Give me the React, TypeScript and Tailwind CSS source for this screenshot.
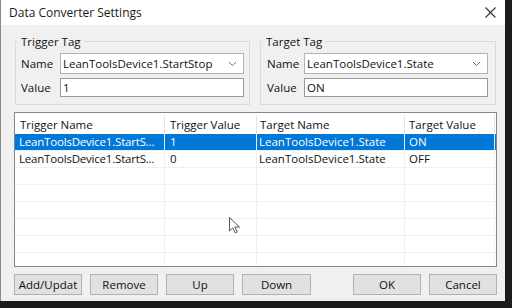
import React from 'react';

type Row = { trigger: string; tval: string; target: string; val: string };

const ROWS: Row[] = [
  { trigger: 'LeanToolsDevice1.StartS...', tval: '1', target: 'LeanToolsDevice1.State', val: 'ON' },
  { trigger: 'LeanToolsDevice1.StartS...', tval: '0', target: 'LeanToolsDevice1.State', val: 'OFF' },
  { trigger: '', tval: '', target: '', val: '' },
  { trigger: '', tval: '', target: '', val: '' },
  { trigger: '', tval: '', target: '', val: '' },
  { trigger: '', tval: '', target: '', val: '' },
  { trigger: '', tval: '', target: '', val: '' },
  { trigger: '', tval: '', target: '', val: '' },
];

const Chevron = () => (
  <svg width="9" height="6" viewBox="0 0 9 6" className="shrink-0">
    <path d="M1 1 L4.5 4.5 L8 1" fill="none" stroke="#6d6d6d" strokeWidth="1" />
  </svg>
);

const TagGroup: React.FC<{ title: string; name: string; value: string; wide?: boolean }> = ({ title, name, value, wide }) => (
  <fieldset className={`border border-[#d9d9d9] ${wide ? 'w-[236px]' : 'w-[235px]'}`}>
    <legend className="ml-[2px] px-[3px] leading-[15px]">{title}</legend>
    <div className={`flex flex-col gap-[4px] pt-[4px] pb-[7px] ${wide ? 'pl-[6px]' : 'pl-[5px]'}`}>
      <div className="flex items-center">
        <span className={wide ? 'w-[37px]' : 'w-[39px]'}>Name</span>
        <div className="flex items-center justify-between h-[21px] w-[184px] bg-white border border-[#b4b4b4] pl-[2px] pr-[6px]">
          <span className="whitespace-nowrap">{name}</span>
          <Chevron />
        </div>
      </div>
      <div className="flex items-center">
        <span className={wide ? 'w-[37px]' : 'w-[39px]'}>Value</span>
        <div className="flex items-center h-[19px] w-[184px] bg-white border border-[#9a9a9a] pl-[2px]">
          <span>{value}</span>
        </div>
      </div>
    </div>
  </fieldset>
);

const Button: React.FC<{ label: string; w?: string }> = ({ label, w }) => (
  <button className={`h-[21px] ${w ?? 'w-[68px]'} bg-[#e1e1e1] border border-[#b2b2b2] text-[#111] flex items-center justify-center`}>
    {label}
  </button>
);

export default function App() {
  return (
    <div className="w-[512px] h-[308px] bg-[#1c1c1c] font-['Open_Sans','Liberation_Sans',sans-serif] text-[11.5px] text-[#111]">
      <div className="w-[505px] h-[301px] border-l border-[#8a8a8a] flex flex-col bg-[#f0f0f0]">
        {/* title bar */}
        <div className="h-[25px] bg-white flex items-center justify-between pl-[8px] pr-[9px] shrink-0">
          <span className="text-[12px] text-[#1a1a1a]">Data Converter Settings</span>
          <svg width="11" height="11" viewBox="0 0 11 11">
            <path d="M0.5 0.5 L10.5 10.5 M10.5 0.5 L0.5 10.5" stroke="#333" strokeWidth="1.1" />
          </svg>
        </div>

        <div className="flex flex-col pt-[9px] pl-[13px]">
          <div className="flex gap-[10px] ml-[1px]">
            <TagGroup title="Trigger Tag" name="LeanToolsDevice1.StartStop" value="1" />
            <TagGroup title="Target Tag" name="LeanToolsDevice1.State" value="ON" wide />
          </div>

          {/* list view */}
          <div className="relative mt-[7px] w-[483px] h-[155px] bg-white border border-[#828790] overflow-hidden">
            <div className="flex h-[21px] items-center pt-[2px]">
              <div className="w-[150px] h-full flex items-center pl-[5px] border-r border-[#e5e5e5]">Trigger Name</div>
              <div className="w-[92px] h-full flex items-center pl-[5px] border-r border-[#e5e5e5]">Trigger Value</div>
              <div className="w-[148px] h-full flex items-center pl-[3px] border-r border-[#e5e5e5]">Target Name</div>
              <div className="w-[90px] h-full flex items-center pl-[4px] border-r border-[#e5e5e5]">Target Value</div>
            </div>
            {ROWS.map((r, i) => (
              <div
                key={i}
                className={`flex h-[17px] border-b border-[#f0f0f0] ${i === 0 ? 'bg-[#0078d7] text-white' : ''}`}
              >
                <div className="w-[150px] h-full flex items-center pl-[4px] border-r border-[#f0f0f0] whitespace-nowrap overflow-hidden tracking-[-0.2px]">{r.trigger}</div>
                <div className="w-[92px] h-full flex items-center pl-[5px] border-r border-[#f0f0f0]">{r.tval}</div>
                <div className="w-[148px] h-full flex items-center pl-[2px] border-r border-[#f0f0f0]">{r.target}</div>
                <div className="w-[90px] h-full flex items-center pl-[4px] border-r border-[#f0f0f0]">{r.val}</div>
              </div>
            ))}
            {/* mouse pointer */}
            <svg className="absolute left-[214px] top-[104px]" width="12" height="17" viewBox="0 0 12 17">
              <path d="M0.5 0.5 L0.5 14 L3.8 10.8 L6.3 16 L8.3 15 L5.8 10 L10.5 10 Z" fill="#fff" stroke="#555" strokeWidth="1" />
            </svg>
          </div>

          {/* buttons */}
          <div className="flex justify-between w-[483px] mt-[7px]">
            <div className="flex gap-[8px]">
              <Button label="Add/Updat" />
              <Button label="Remove" />
              <Button label="Up" />
              <Button label="Down" w="w-[69px]" />
            </div>
            <div className="flex gap-[8px]">
              <Button label="OK" />
              <Button label="Cancel" />
            </div>
          </div>
        </div>
      </div>
    </div>
  );
}
